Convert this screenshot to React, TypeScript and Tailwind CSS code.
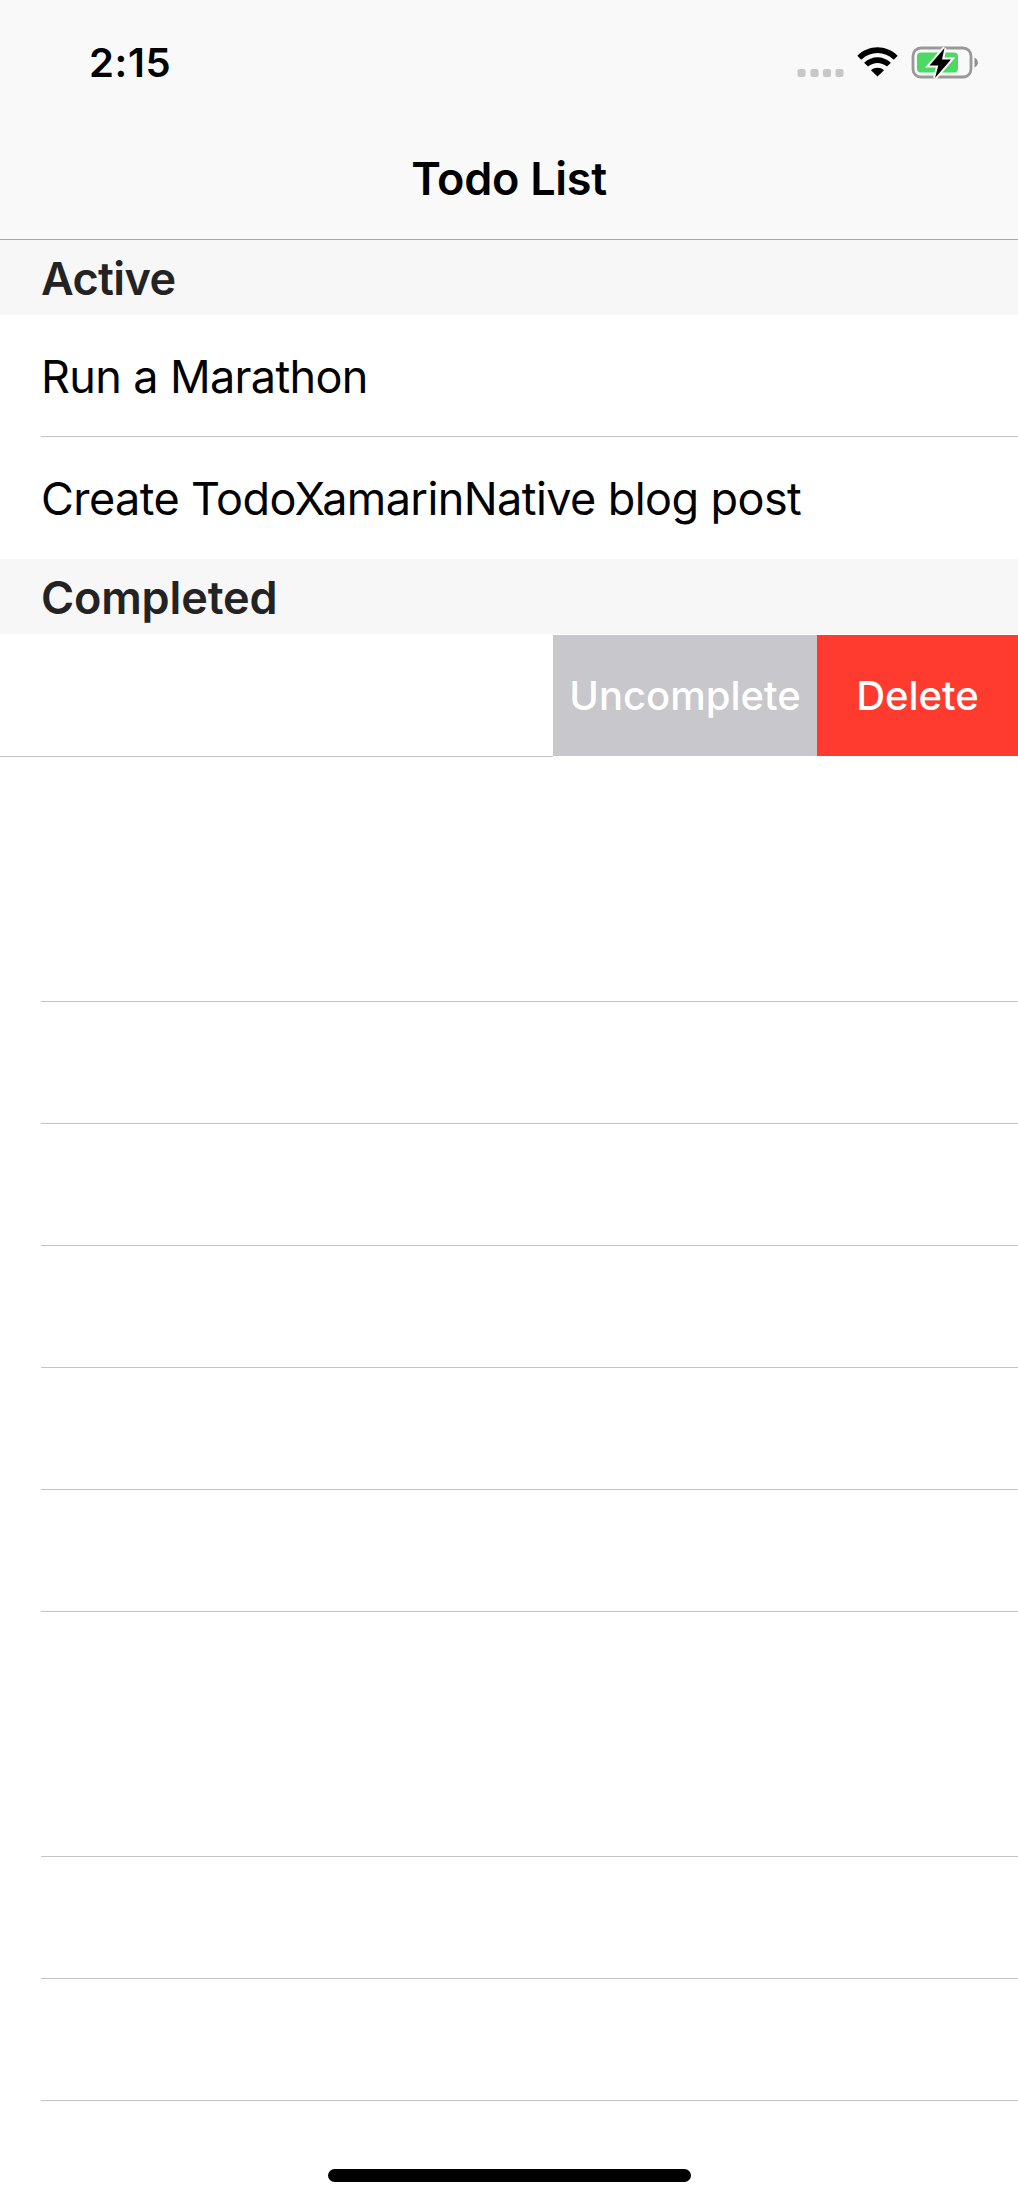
import React from 'react';

function StatusBar() {
  return (
    <div className="flex h-[118px] items-start justify-between bg-[#f9f9f9] pl-[89px] pr-[38px]">
      <div className="mt-[39px] text-[40px] font-semibold leading-[48px] tracking-[0.6px] text-black">2:15</div>
      <svg className="mt-[40px]" width="184" height="45" viewBox="0 0 184 45" fill="none">
        <g fill="#c7c7c7">
          <rect x="1.5" y="29" width="8" height="8" rx="2" />
          <rect x="14.5" y="29" width="8" height="8" rx="2" />
          <rect x="27" y="29" width="8" height="8" rx="2" />
          <rect x="39.5" y="29" width="8" height="8" rx="2" />
        </g>
        <g fill="#000">
          <path d="M61.3 15.8 C72.5 4.3 90.5 4.3 101.7 15.8 L97.8 19.7 C88.5 10.8 74.5 10.8 65.2 19.7 Z" />
          <path d="M68.1 22.7 C76 15.3 87 15.3 94.9 22.7 L91 26.6 C85.2 21.7 77.8 21.7 72 26.6 Z" />
          <path d="M75 30.2 C79 27 84 27 88 30.2 L81.5 36.5 Z" />
        </g>
        <rect x="117" y="8" width="58" height="29" rx="8" stroke="#999999" strokeWidth="2.8" />
        <path d="M178.5 17.5 C183 19.5 183 25.5 178.5 27.5 Z" fill="#8f8f8f" />
        <rect x="121" y="12.5" width="41" height="20" rx="4" fill="#4cd964" />
        <path d="M148.5 8 L133.5 25.5 L142.3 25.5 L139 38 L155 19.5 L146 19.5 Z" fill="#000" stroke="#f9f9f9" strokeWidth="4" paintOrder="stroke" />
      </svg>
    </div>
  );
}

function SectionHeader({ title, tracking }: { title: string; tracking: string }) {
  return (
    <h2 className="flex h-[75px] items-center bg-[#f7f7f7] pl-[41px] pt-[3px] text-[45px] font-semibold leading-[54px] text-[#232323]">
      <span className={tracking}>{title}</span>
    </h2>
  );
}

function EmptyRow({ tall = false }: { tall?: boolean }) {
  return (
    <div className={tall ? 'h-[245px] pl-[41px]' : 'h-[122px] pl-[41px]'}>
      <div className="h-full border-b border-[#c4c4c6]" />
    </div>
  );
}

const rows = [true, false, false, false, false, false, true, false, false];

export default function App() {
  return (
    <main className="flex h-[2204px] w-[1018px] flex-col overflow-hidden bg-white font-['Inter',sans-serif] text-black">
      <StatusBar />
      <header className="flex h-[122px] items-center justify-center border-b border-[#a6a6a6] bg-[#f9f9f9] pt-px">
        <h1 className="text-[45px] font-semibold leading-[54px] tracking-[-0.3px]">Todo List</h1>
      </header>

      <SectionHeader title="Active" tracking="tracking-[-0.6px]" />
      <div className="h-[122px] pl-[41px]">
        <div className="flex h-full items-center border-b border-[#c4c4c6] pt-[3px] text-[45px] leading-[54px]">
          <span className="tracking-[-0.64px]">Run a Marathon</span>
        </div>
      </div>
      <div className="flex h-[122px] items-center pl-[41px] pt-[2px] text-[45px] leading-[54px]">
        <span className="tracking-[-0.58px]">Create TodoXamarinNative blog post</span>
      </div>

      <SectionHeader title="Completed" tracking="tracking-[-0.15px]" />
      <div className="flex h-[123px]">
        <div className="w-[553px] border-b border-[#c4c4c6]" />
        <button className="mt-px flex h-[121px] w-[264px] items-center justify-center bg-[#c7c7cc] text-[40px] font-medium leading-[48px] text-white">
          <span>Uncomplete</span>
        </button>
        <button className="mt-px flex h-[121px] w-[201px] items-center justify-center bg-[#ff3b30] text-[40px] font-medium leading-[48px] text-white">
          <span>Delete</span>
        </button>
      </div>

      {rows.map((tall, i) => (
        <EmptyRow key={i} tall={tall} />
      ))}

      <div className="mx-auto mt-[68px] h-[13px] w-[363px] rounded-full bg-black" />
    </main>
  );
}
